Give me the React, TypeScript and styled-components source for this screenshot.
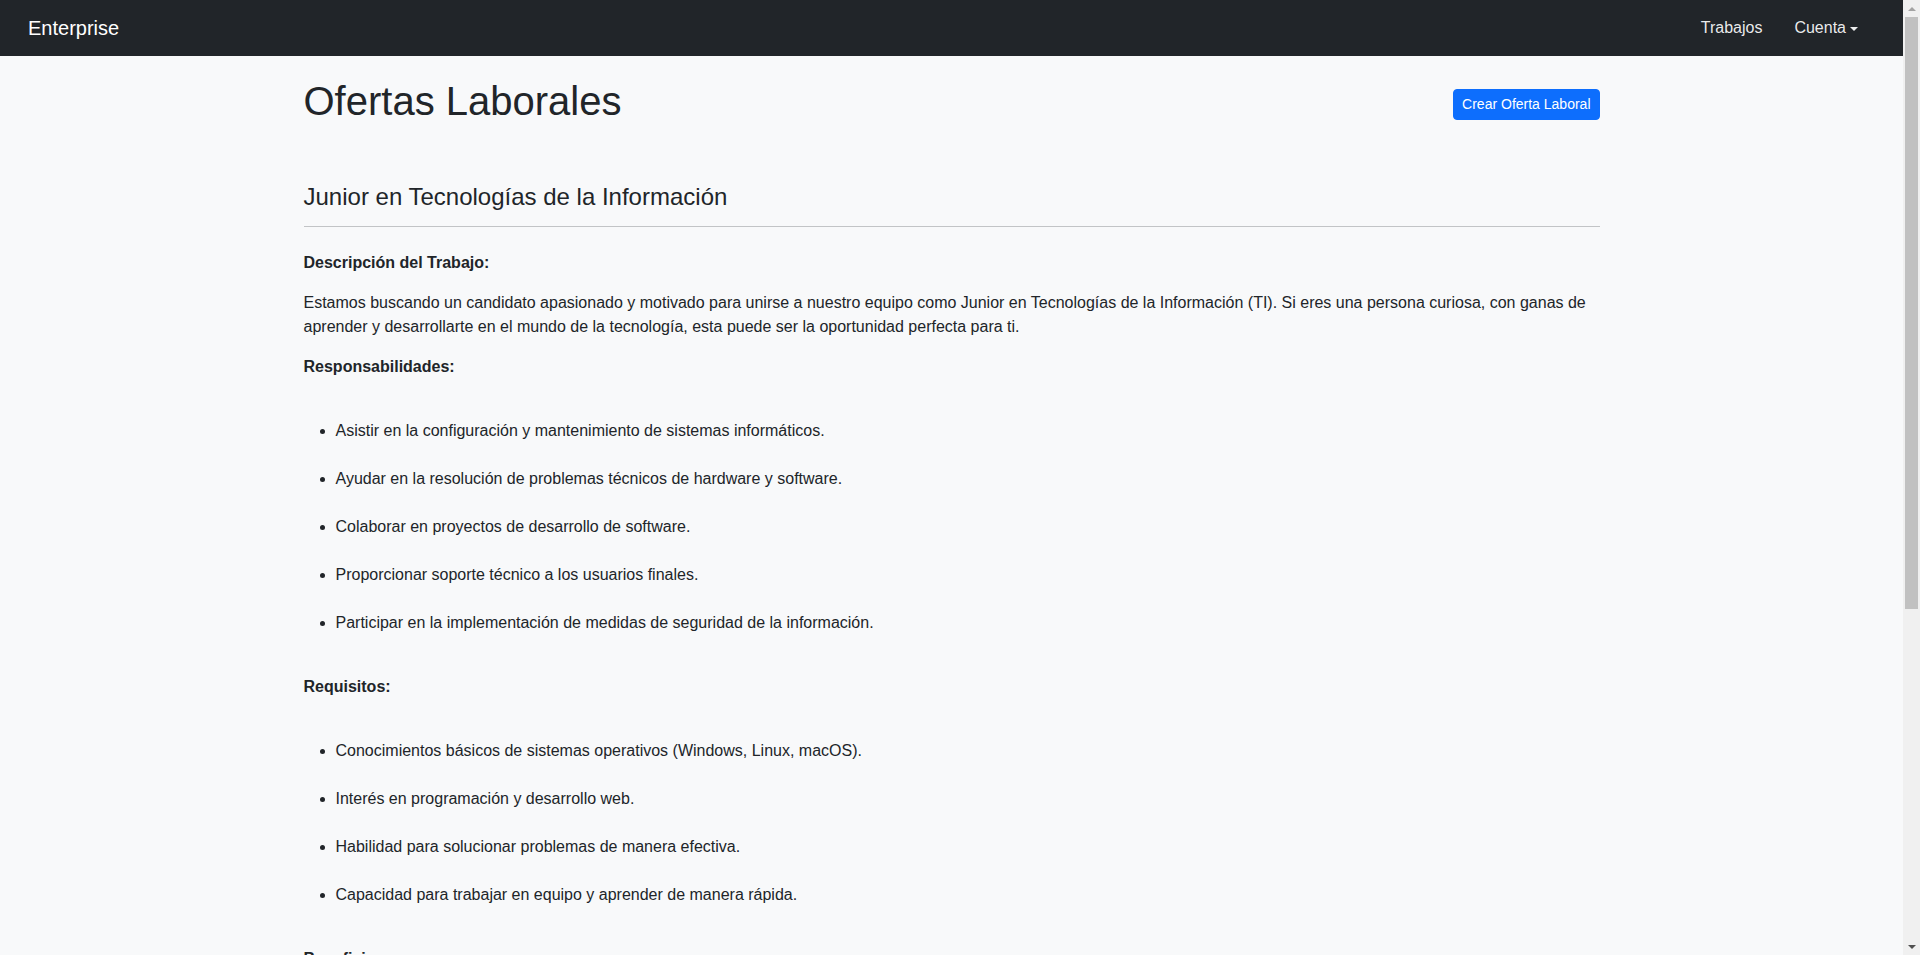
import React from "react";
import styled, { createGlobalStyle } from "styled-components";

const GlobalStyle = createGlobalStyle`
  html, body {
    margin: 0;
    padding: 0;
    height: 100%;
    overflow: hidden;
    background: #f8f9fa;
  }
  body {
    font-family: "Liberation Sans", Arial, sans-serif;
    font-size: 16px;
    line-height: 1.5;
    color: #212529;
  }
  #root { height: 100%; }
  * { box-sizing: border-box; }
`;

const Shell = styled.div`
  display: flex;
  height: 100vh;
`;

const Page = styled.div`
  flex: 1;
  min-width: 0;
  height: 100%;
  overflow-y: auto;
  scrollbar-width: none;
  &::-webkit-scrollbar { display: none; }
`;

const ScrollRail = styled.div`
  width: 17px;
  flex: none;
  background: #f0f0f0;
  display: flex;
  flex-direction: column;
`;

const RailButton = styled.div<{ $down?: boolean }>`
  height: 17px;
  flex: none;
  display: flex;
  align-items: center;
  justify-content: center;
  &::before {
    content: "";
    width: 0;
    height: 0;
    border-left: 4px solid transparent;
    border-right: 4px solid transparent;
    ${(p) =>
      p.$down
        ? "border-top: 4px solid #505050;"
        : "border-bottom: 4px solid #a3a3a3;"}
  }
`;

const RailTrack = styled.div`
  flex: 1;
  display: flex;
  flex-direction: column;
`;

const RailThumb = styled.div`
  height: 592px;
  margin: 0 2px;
  background: #c1c1c1;
`;

const NavBar = styled.nav`
  height: 56px;
  background: #212529;
  display: flex;
  align-items: center;
  justify-content: space-between;
  padding: 0 29px 0 28px;
`;

const Brand = styled.a`
  font-size: 20px;
  line-height: 30px;
  color: #ffffff;
  text-decoration: none;
`;

const NavLinks = styled.div`
  display: flex;
  align-items: center;
`;

const NavLink = styled.a<{ $caret?: boolean }>`
  padding: 8px 16px;
  font-size: 16px;
  line-height: 24px;
  color: rgba(255, 255, 255, 0.92);
  text-decoration: none;
  display: inline-flex;
  align-items: center;
  &::after {
    content: ${(p) => (p.$caret ? "''" : "none")};
    display: inline-block;
    margin-left: 4px;
    margin-top: 1px;
    border-top: 4px solid rgba(255, 255, 255, 0.92);
    border-left: 4px solid transparent;
    border-right: 4px solid transparent;
    border-bottom: 0;
  }
`;

const Container = styled.main`
  max-width: 1320px;
  margin: 0 auto;
  padding: 21px 12px 227px;
`;

const HeaderRow = styled.div`
  display: flex;
  align-items: center;
  justify-content: space-between;
`;

const PageTitle = styled.h1`
  margin: 0;
  font-size: 40px;
  line-height: 48px;
  font-weight: 500;
`;

const PrimaryButton = styled.button`
  margin-top: 6px;
  font-family: inherit;
  font-size: 14px;
  line-height: 21px;
  padding: 4px 8px;
  color: #ffffff;
  background: #0d6efd;
  border: 1px solid #0d6efd;
  border-radius: 4px;
  cursor: pointer;
`;

const JobTitle = styled.h4`
  margin: 57px 0 0;
  font-size: 24px;
  line-height: 29px;
  font-weight: 500;
`;

const Divider = styled.hr`
  margin: 15px 0 24px;
  border: 0;
  border-top: 1px solid #c2c4c6;
`;

const SectionLabel = styled.p`
  margin: 0 0 16px;
  font-weight: 700;
`;

const Paragraph = styled.p`
  margin: 0 0 16px;
`;

const BulletList = styled.ul`
  margin: 0 0 16px;
  padding: 12px 0 12px 32px;
  list-style: disc;
`;

const BulletItem = styled.li`
  padding: 12px 0;
`;

const sections: { label: string; items: string[] }[] = [
  {
    label: "Responsabilidades:",
    items: [
      "Asistir en la configuración y mantenimiento de sistemas informáticos.",
      "Ayudar en la resolución de problemas técnicos de hardware y software.",
      "Colaborar en proyectos de desarrollo de software.",
      "Proporcionar soporte técnico a los usuarios finales.",
      "Participar en la implementación de medidas de seguridad de la información.",
    ],
  },
  {
    label: "Requisitos:",
    items: [
      "Conocimientos básicos de sistemas operativos (Windows, Linux, macOS).",
      "Interés en programación y desarrollo web.",
      "Habilidad para solucionar problemas de manera efectiva.",
      "Capacidad para trabajar en equipo y aprender de manera rápida.",
    ],
  },
  {
    label: "Beneficios:",
    items: [
      "Salario competitivo.",
      "Oportunidades de crecimiento y desarrollo profesional.",
      "Capacitación continua en nuevas tecnologías.",
      "Ambiente de trabajo colaborativo y dinámico.",
    ],
  },
];

export default function App() {
  return (
    <>
      <GlobalStyle />
      <Shell>
        <Page>
          <NavBar>
            <Brand href="#">Enterprise</Brand>
            <NavLinks>
              <NavLink href="#">Trabajos</NavLink>
              <NavLink href="#" $caret>
                Cuenta
              </NavLink>
            </NavLinks>
          </NavBar>
          <Container>
            <HeaderRow>
              <PageTitle>Ofertas Laborales</PageTitle>
              <PrimaryButton>Crear Oferta Laboral</PrimaryButton>
            </HeaderRow>
            <JobTitle>Junior en Tecnologías de la Información</JobTitle>
            <Divider />
            <SectionLabel>Descripción del Trabajo:</SectionLabel>
            <Paragraph>
              Estamos buscando un candidato apasionado y motivado para unirse a nuestro equipo como Junior en
              Tecnologías de la Información (TI). Si eres una persona curiosa, con ganas de aprender y
              desarrollarte en el mundo de la tecnología, esta puede ser la oportunidad perfecta para ti.
            </Paragraph>
            {sections.map((s) => (
              <React.Fragment key={s.label}>
                <SectionLabel>{s.label}</SectionLabel>
                <BulletList>
                  {s.items.map((it) => (
                    <BulletItem key={it}>{it}</BulletItem>
                  ))}
                </BulletList>
              </React.Fragment>
            ))}
            <Paragraph>
              Si estás interesado en esta oportunidad, ¡esperamos tu postulación!
            </Paragraph>
          </Container>
        </Page>
        <ScrollRail aria-hidden="true">
          <RailButton />
          <RailTrack>
            <RailThumb />
          </RailTrack>
          <RailButton $down />
        </ScrollRail>
      </Shell>
    </>
  );
}
